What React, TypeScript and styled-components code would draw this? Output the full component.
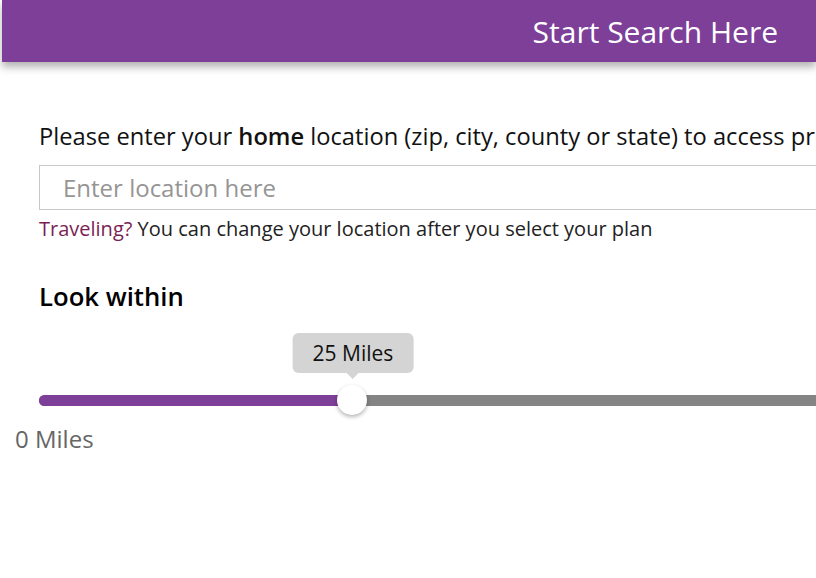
import * as React from "react"
import styled, { createGlobalStyle } from "styled-components"

const GlobalStyle = createGlobalStyle`
    html, body {
        margin: 0;
        padding: 0;
        background: #fff;
        overflow: hidden;
        font-family: "Open Sans", "Noto Sans", sans-serif;
    }
`

const purple = "#7d3f98"

const Page = styled.div`
    width: 816px;
    height: 578px;
    overflow: hidden;
`

const Header = styled.header`
    display: flex;
    justify-content: flex-end;
    align-items: center;
    height: 62px;
    margin-left: 2px;
    padding-right: 38px;
    background: ${purple};
    box-shadow: 0 5px 8px rgba(0, 0, 0, 0.3);
    color: #fff;
    font-size: 30px;
`

const Content = styled.main`
    width: 1100px;
    padding: 59px 0 0 39px;
`

const Prompt = styled.p`
    margin: 0;
    font-size: 23.7px;
    line-height: 30px;
    color: #111;
    white-space: nowrap;

    b {
        font-weight: 600;
    }
`

const LocationInput = styled.input`
    display: block;
    box-sizing: border-box;
    width: 100%;
    height: 45px;
    margin-top: 14px;
    padding: 0 23px;
    border: 1px solid #c8c8c8;
    font-family: inherit;
    font-size: 24px;
    color: #333;
    outline: none;

    &::placeholder {
        color: #959595;
    }
`

const Hint = styled.p`
    margin: 6px 0 0;
    font-size: 20px;
    line-height: 26px;
    color: #222;
`

const Traveling = styled.span`
    color: #7a1f55;
`

const SectionTitle = styled.h2`
    margin: 39px 0 0;
    font-size: 25.7px;
    line-height: 32px;
    font-weight: 600;
    color: #000;
`

const SliderArea = styled.div`
    position: relative;
    margin-top: 20px;
    height: 70px;
`

const Track = styled.div`
    position: absolute;
    left: 0;
    right: 0;
    top: 62px;
    height: 11px;
    border-radius: 6px;
    background: #848484;
`

const Fill = styled.div`
    height: 100%;
    border-radius: 6px;
    background: ${purple};
`

const Thumb = styled.div`
    position: absolute;
    top: 52px;
    width: 30px;
    height: 30px;
    margin-left: -15px;
    border-radius: 50%;
    background: #fff;
    box-shadow: 0 2px 4px rgba(0, 0, 0, 0.3);
`

const Bubble = styled.div`
    position: absolute;
    top: 0;
    transform: translateX(-50%);
    padding: 0 20px;
    height: 40px;
    line-height: 40px;
    border-radius: 6px;
    background: #d4d4d4;
    font-size: 21px;
    color: #111;
    white-space: nowrap;

    &::after {
        content: "";
        position: absolute;
        left: 50%;
        bottom: -6px;
        margin-left: -6px;
        border-left: 6px solid transparent;
        border-right: 6px solid transparent;
        border-top: 6px solid #d4d4d4;
    }
`

const MinLabel = styled.div`
    margin: 21px 0 0 -24px;
    font-size: 24px;
    line-height: 30px;
    color: #666;
`

const fillWidth = 313

export default function App() {
    return (
        <Page>
            <GlobalStyle />
            <Header>Start Search Here</Header>
            <Content>
                <Prompt>
                    Please enter your <b>home</b> location (zip, city, county or state) to access providers near you
                </Prompt>
                <LocationInput placeholder="Enter location here" />
                <Hint>
                    <Traveling>Traveling?</Traveling> You can change your location after you select your plan
                </Hint>
                <SectionTitle>Look within</SectionTitle>
                <SliderArea>
                    <Track>
                        <Fill style={{ width: fillWidth }} />
                    </Track>
                    <Bubble style={{ left: fillWidth + 1 }}>25 Miles</Bubble>
                    <Thumb style={{ left: fillWidth }} />
                </SliderArea>
                <MinLabel>0 Miles</MinLabel>
            </Content>
        </Page>
    )
}
